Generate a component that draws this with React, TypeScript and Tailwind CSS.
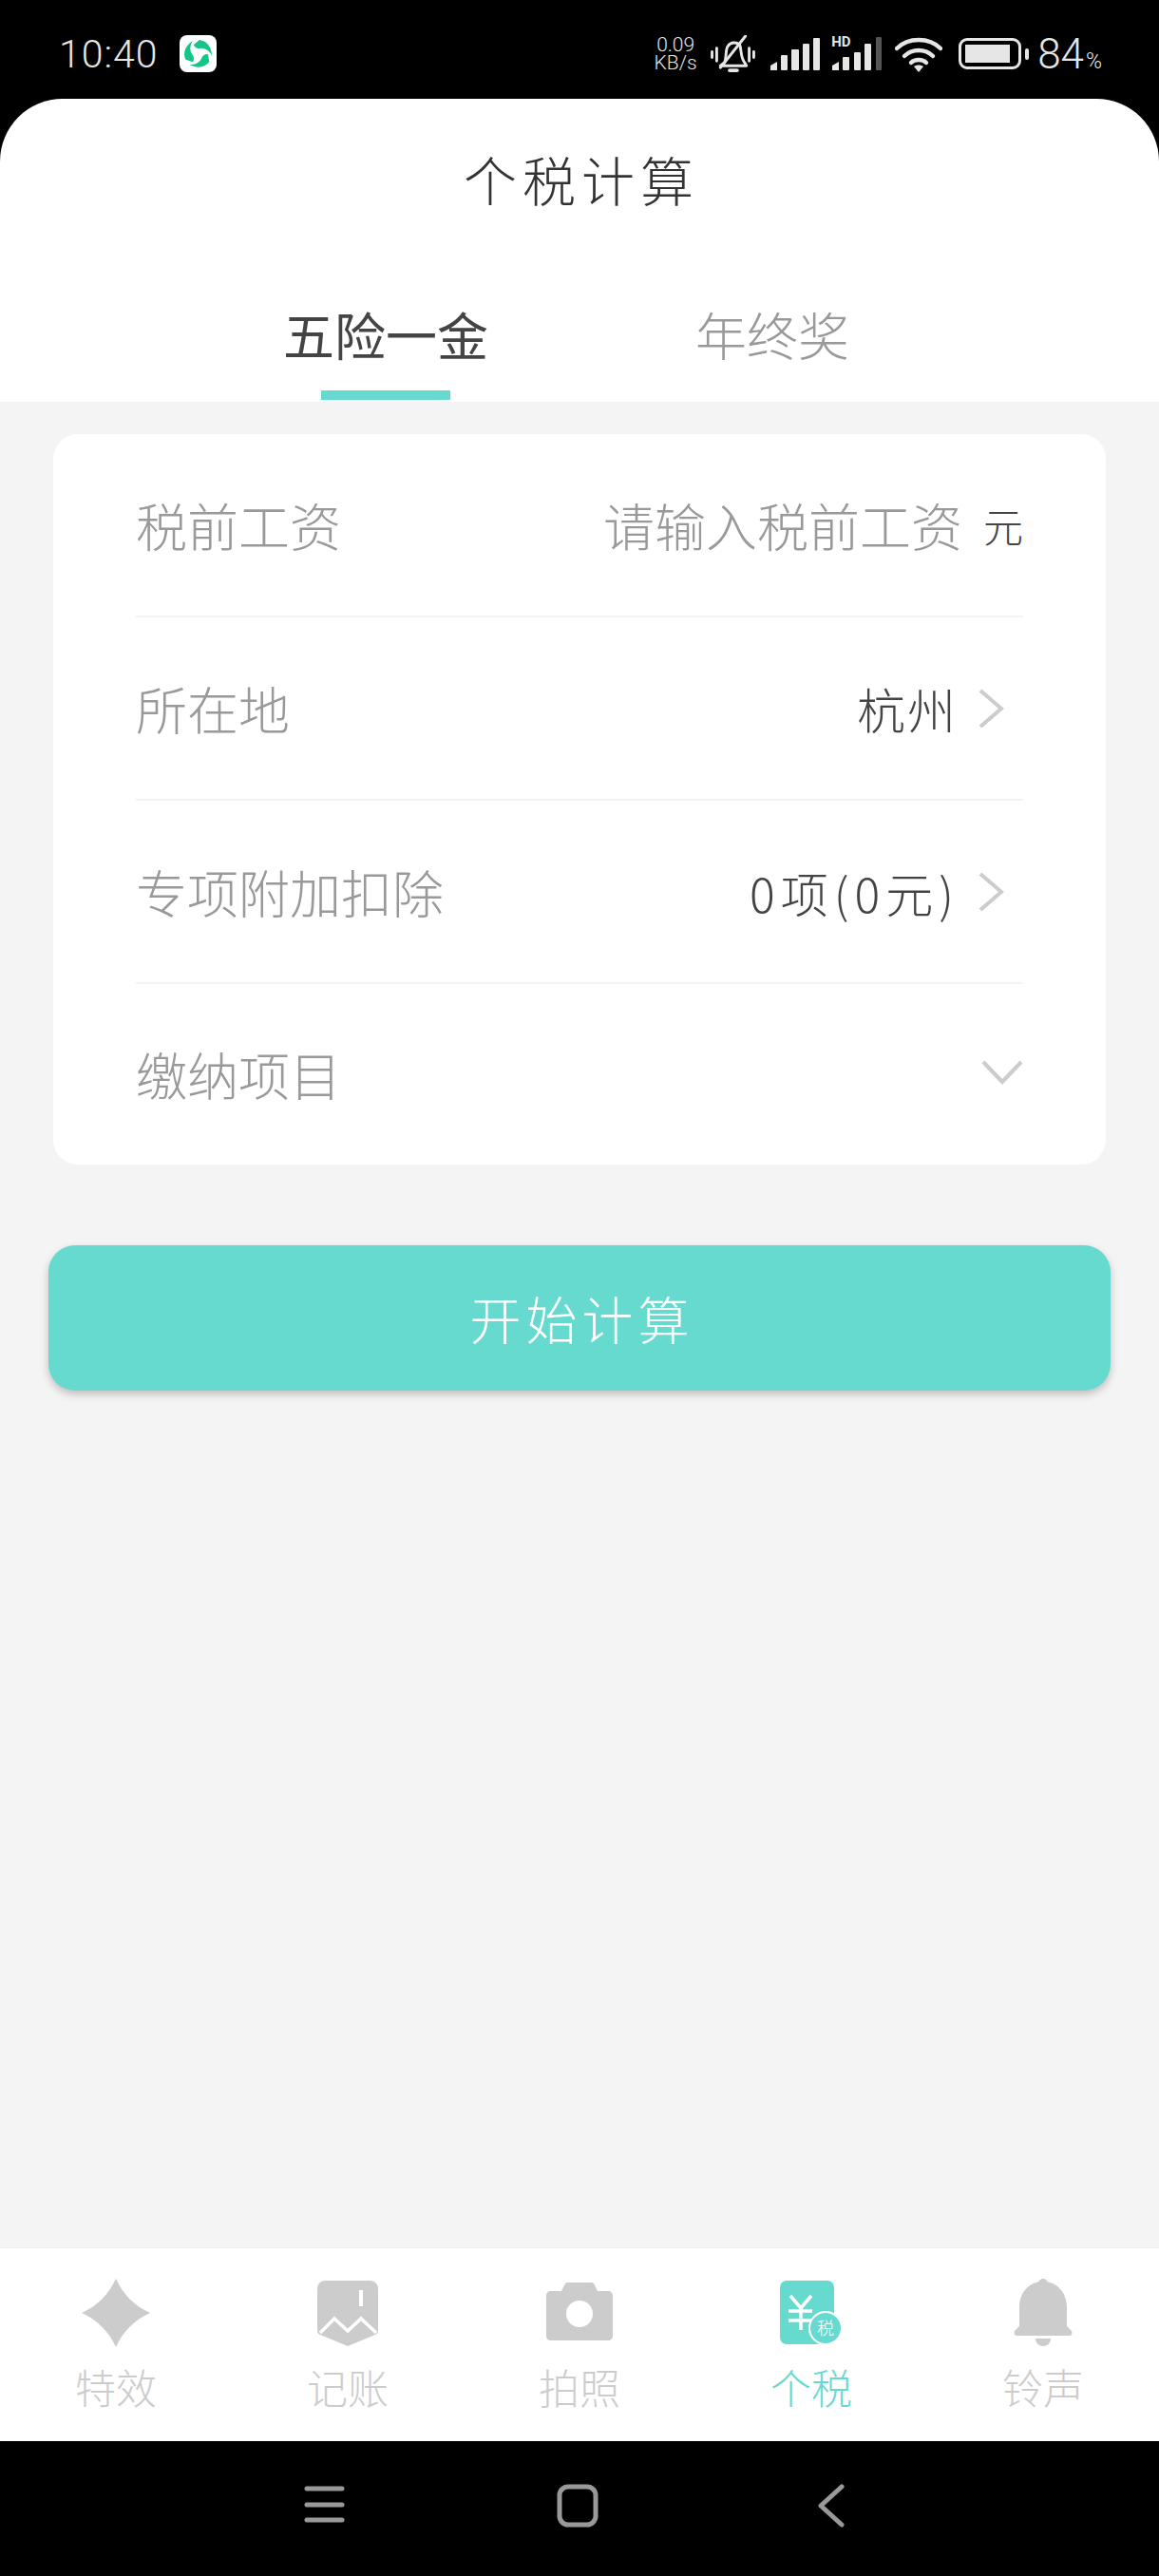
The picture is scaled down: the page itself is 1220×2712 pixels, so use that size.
const CJK = "font-['Noto_Sans_CJK_SC','Noto_Sans',sans-serif] font-light";

function StatusBar() {
  return (
    <div className="h-[104px] relative flex items-start text-[#e6e6e6]">
      <span className="ml-[62px] mt-[31px] text-[41px] leading-[52px] tracking-[1px] font-['Roboto',sans-serif] font-light">10:40</span>
      <div className="ml-[22px] mt-[37px] w-[39px] h-[39px] rounded-[8px] bg-white flex items-center justify-center">
        <svg width="33" height="33" viewBox="0 0 33 33" fill="#12c785">
          <path d="M18 2 C26 3 31 10 31 19 C29 13 23 10 18 11 C15 11 12 9 12 7 Z" />
          <path d="M18 2 C26 3 31 10 31 19 C29 13 23 10 18 11 C15 11 12 9 12 7 Z" transform="rotate(120 16.5 16.5)" />
          <path d="M18 2 C26 3 31 10 31 19 C29 13 23 10 18 11 C15 11 12 9 12 7 Z" transform="rotate(240 16.5 16.5)" />
        </svg>
      </div>
      <div className="ml-auto mr-[60px] mt-[38px] flex items-start">
        <div className="w-[48px] text-[21px] leading-[19px] font-['Roboto',sans-serif] font-light text-center">
          <div>0.09</div>
          <div>KB/s</div>
        </div>
        <svg className="ml-[13px] -mt-[1px]" width="47" height="41" viewBox="0 0 47 42" fill="none" stroke="#e6e6e6" strokeWidth="3" strokeLinecap="round">
          <path d="M14 30 C17 26 15 16 18 12 C21 7 28 7 31 11 C33 16 31 24 37 31 L38 33 H10 Z" strokeLinejoin="round" />
          <path d="M10 35 L37 1" />
          <path d="M1 18 V24 M6 14 V28 M41 14 V28 M46 18 V24" />
          <path d="M20 38 H28" strokeWidth="4" />
        </svg>
        <svg className="ml-[16px] mt-[2px]" width="52" height="34" viewBox="0 0 52 34" fill="#e6e6e6">
          <path d="M0 29 L7 25 V34 H0 Z" />
          <rect x="11" y="18" width="7" height="16" rx="1" />
          <rect x="22" y="12" width="8" height="22" rx="1" />
          <rect x="34" y="6" width="7" height="28" rx="1" />
          <rect x="45" y="0" width="7" height="34" rx="1" />
        </svg>
        <div className="ml-[12px] relative w-[54px] h-[36px]">
          <span className="absolute left-0 -top-[2px] text-[15px] leading-[16px] font-bold font-['Roboto',sans-serif]">HD</span>
          <svg className="absolute left-0 top-0" width="54" height="36" viewBox="0 0 54 36" fill="#e6e6e6">
            <path d="M1 31 L8 27 V36 H1 Z" />
            <rect x="12" y="22" width="7" height="14" rx="1" />
            <rect x="24" y="17" width="7" height="19" rx="1" />
            <rect x="35" y="8" width="7" height="28" rx="1" />
            <rect x="47" y="1" width="6" height="35" rx="1" fill="#555" />
          </svg>
        </div>
        <svg className="ml-[13px]" width="50" height="38" viewBox="0 0 50 38" fill="none" stroke="#e6e6e6" strokeWidth="4.5" strokeLinecap="round">
          <path d="M2 13 C14 1 36 1 48 13" />
          <path d="M10 21 C18 13 32 13 40 21" />
          <path d="M17 28 C21 24 29 24 33 28" />
          <path d="M20 32 L25 38 L30 32 C27 30 23 30 20 32 Z" fill="#e6e6e6" stroke="none" />
        </svg>
        <div className="ml-[17px] mt-[2px] w-[66px] h-[33px] rounded-[9px] border-[3px] border-[#e6e6e6] p-[4px]">
          <div className="h-full w-[47px] bg-[#e6e6e6]" />
        </div>
        <div className="ml-[4px] mt-[13px] w-[4px] h-[12px] rounded-[2px] bg-[#e6e6e6]" />
        <span className="ml-[9px] -mt-[8px] text-[44px] leading-[54px] font-['Roboto',sans-serif] font-light">84</span>
        <span className="ml-[2px] mt-[12px] text-[23px] leading-[30px] font-['Roboto',sans-serif] font-light">%</span>
      </div>
    </div>
  );
}

function Chevron() {
  return (
    <svg className="ml-[20px] mr-[20px]" width="27" height="42" viewBox="0 0 27 42" fill="none" stroke="#cccccc" strokeWidth="4">
      <path d="M2 2 L24 21 L2 40" />
    </svg>
  );
}

function Row({ label, children, last }: { label: string; children?: React.ReactNode; last?: boolean }) {
  return (
    <div className={`mx-[87px] flex items-center justify-between ${last ? "h-[190px]" : "h-[193px] border-b-2 border-[#f3f3f3]"}`}>
      <span className="text-[#999999] text-[54px] leading-[70px]">{label}</span>
      {children}
    </div>
  );
}

function StarIcon() {
  return (
    <svg width="72" height="72" viewBox="0 0 72 72" fill="#cccccc">
      <path d="M36 0 C43 16 56 29 72 36 C56 43 43 56 36 72 C29 56 16 43 0 36 C16 29 29 16 36 0 Z" />
    </svg>
  );
}

function LedgerIcon() {
  return (
    <svg width="66" height="70" viewBox="0 0 66 70" fill="#cccccc">
      <path d="M10 1 H56 C62 1 65 5 65 10 V54 C65 56 64 57 62 58 L33 70 L4 58 C2 57 1 56 1 54 V10 C1 5 4 1 10 1 Z" />
      <path d="M4 56 L19 41 L33 54 L47 41 L63 56" fill="none" stroke="#ffffff" strokeWidth="3.5" />
      <rect x="45" y="11" width="4" height="17" fill="#ffffff" />
    </svg>
  );
}

function CameraIcon() {
  return (
    <svg width="72" height="72" viewBox="0 0 72 72" fill="#cccccc">
      <path d="M6 13 H17 L21 5 C22 4 23 4 24 4 H48 C49 4 50 4 51 5 L55 13 H66 C69 13 71 15 71 18 V60 C71 63 69 65 66 65 H6 C3 65 1 63 1 60 V18 C1 15 3 13 6 13 Z" />
      <circle cx="36" cy="37" r="14" fill="#ffffff" />
    </svg>
  );
}

function TaxIcon() {
  return (
    <svg width="68" height="70" viewBox="0 0 68 70" fill="#67dacf">
      <rect x="1" y="1" width="57" height="67" rx="7" />
      <path d="M12 17 L23 30 L34 17 M10 33 H35 M10 43 H35 M23 30 V53" fill="none" stroke="#ffffff" strokeWidth="3.5" />
      <circle cx="49" cy="51" r="17" stroke="#ffffff" strokeWidth="2" />
      <text x="49" y="58" textAnchor="middle" fontSize="18" fill="#ffffff" fontFamily="'Noto Sans CJK SC',sans-serif">税</text>
    </svg>
  );
}

function BellIcon() {
  return (
    <svg width="62" height="72" viewBox="0 0 62 72" fill="#cccccc">
      <circle cx="31" cy="5" r="5" />
      <path d="M31 3 C16 3 6 15 6 30 V50 L1 55 C0 58 1 60 4 60 H58 C61 60 62 58 61 55 L56 50 V30 C56 15 46 3 31 3 Z" />
      <path d="M23 63 H39 C39 68 35 71 31 71 C27 71 23 68 23 63 Z" />
    </svg>
  );
}

function NavItem({ icon, label, active }: { icon: React.ReactNode; label: string; active?: boolean }) {
  return (
    <div className="w-[244px] flex flex-col items-center">
      <div className="h-[72px] flex items-center justify-center">{icon}</div>
      <span className={`mt-[16px] text-[43px] leading-[50px] ${active ? "text-[#67dacf]" : "text-[#cccccc]"}`}>{label}</span>
    </div>
  );
}

export default function App() {
  return (
    <div className={`w-[1220px] h-[2712px] bg-black flex flex-col ${CJK}`}>
      <StatusBar />

      {/* Header with tabs */}
      <div className="h-[319px] shrink-0 bg-white rounded-t-[66px] flex flex-col items-center">
        <h1 className="mt-[49px] pl-[4px] text-[#333333] text-[56px] leading-[70px] tracking-[6px] font-light">个税计算</h1>
        <div className="mt-[98px] w-full flex h-[102px]">
          <div className="ml-[298px] w-[216px] flex flex-col items-center">
            <span className="text-[#444444] text-[54px] leading-[62px] font-normal whitespace-nowrap">五险一金</span>
            <div className="mt-[28px] w-[136px] h-[10px] bg-[#67dacf]" />
          </div>
          <span className="ml-[218px] text-[#999999] text-[54px] leading-[62px]">年终奖</span>
        </div>
      </div>

      <div className="flex-1 bg-[#f4f4f4] flex flex-col pt-[34px]">
        <div className="mx-[56px] h-[769px] bg-white rounded-[26px]">
          <Row label="税前工资">
            <div className="flex items-center">
              <span className="text-[#999999] text-[54px] leading-[70px] whitespace-nowrap">请输入税前工资</span>
              <span className="ml-[22px] text-[#444444] text-[42px] leading-[50px]">元</span>
            </div>
          </Row>
          <Row label="所在地">
            <div className="flex items-center">
              <span className="pr-[2px] text-[#444444] text-[51px] leading-[70px] tracking-[2px]">杭州</span>
              <Chevron />
            </div>
          </Row>
          <Row label="专项附加扣除">
            <div className="flex items-center">
              <span className="text-[#444444] text-[50px] leading-[70px] tracking-[6px] whitespace-nowrap">0项(0元)</span>
              <Chevron />
            </div>
          </Row>
          <Row label="缴纳项目" last>
            <svg className="-mt-[5px]" width="44" height="28" viewBox="0 0 44 28" fill="none" stroke="#cccccc" strokeWidth="4">
              <path d="M2 3 L22 24 L42 3" />
            </svg>
          </Row>
        </div>

        <button className="mx-[51px] mt-[85px] h-[153px] rounded-[28px] bg-[#67dacf] text-white text-[54px] tracking-[5px] pl-[5px] font-light shadow-[0_4px_8px_rgba(0,0,0,0.22)]">
          开始计算
        </button>
      </div>

      {/* Tab bar */}
      <div className="h-[204px] shrink-0 bg-white border-t border-[#eeeeee] flex pt-[32px]">
        <NavItem icon={<StarIcon />} label="特效" />
        <NavItem icon={<LedgerIcon />} label="记账" />
        <NavItem icon={<CameraIcon />} label="拍照" />
        <NavItem icon={<TaxIcon />} label="个税" active />
        <NavItem icon={<BellIcon />} label="铃声" />
      </div>

      {/* System navigation */}
      <div className="h-[142px] shrink-0 flex items-start pt-[45px]">
        <svg className="ml-[320px]" width="43" height="44" viewBox="0 0 43 44" fill="none" stroke="#999999" strokeWidth="5" strokeLinecap="round">
          <path d="M3 5 H40 M3 22 H40 M3 38 H40" />
        </svg>
        <svg className="ml-[223px]" width="44" height="46" viewBox="0 0 44 46" fill="none" stroke="#999999" strokeWidth="5">
          <rect x="3" y="3" width="38" height="40" rx="9" />
        </svg>
        <svg className="ml-[231px]" width="28" height="46" viewBox="0 0 28 46" fill="none" stroke="#999999" strokeWidth="5" strokeLinecap="round" strokeLinejoin="round">
          <path d="M25 3 L3 23 L25 43" />
        </svg>
      </div>
    </div>
  );
}
